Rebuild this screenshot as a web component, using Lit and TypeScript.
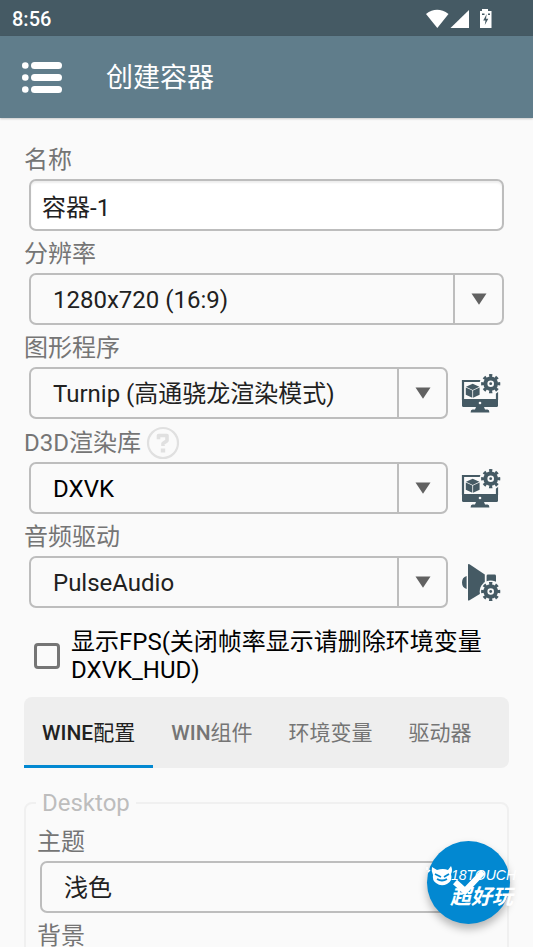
import { LitElement, html, css, svg, nothing } from "lit";
import { customElement, property, state } from "lit/decorators.js";

const gear = (cx: number, cy: number, halo: string) => svg`
  <circle cx=${cx} cy=${cy} r="11" fill=${halo} />
  <circle cx=${cx} cy=${cy} r="5.3" fill="none" stroke="#455a64" stroke-width="4" />
  <circle cx=${cx} cy=${cy} r="8" fill="none" stroke="#455a64" stroke-width="3.2"
    pathLength="16" stroke-dasharray="1 1" stroke-dashoffset="0.5" />
  <circle cx=${cx} cy=${cy} r="1.4" fill="#455a64" />`;

const displayIcon = html`
  <svg width="40" height="40" viewBox="0 0 40 40" aria-hidden="true">
    <path d="M2 27V8H36V27" fill="none" stroke="#455a64" stroke-width="2.2" />
    <path d="M1 26H37V32.5Q37 34 35.5 34H2.5Q1 34 1 32.5Z" fill="#455a64" />
    <circle cx="19" cy="30" r="1.3" fill="#fafafa" />
    <path d="M15 34H23L24 36.6H26.5Q28.4 36.8 28.4 39.4H9.6Q9.6 36.8 11.5 36.6H14Z" fill="#455a64" />
    <path d="M11.7 10.8L18.4 13.8L11.7 16.9L5 13.8Z M4.800 14.600L11.300 17.600V24.8L4.800 21.800Z M18.600 14.600L12.100 17.600V24.8L18.600 21.800Z" fill="#455a64" />
    ${gear(29.7, 10.7, "#fafafa")}
  </svg>`;

const audioIcon = html`
  <svg width="40" height="40" viewBox="0 0 40 40" aria-hidden="true">
    <path d="M5.6 14V27Q1 25.600 1 20.500T5.600 14Z" fill="#455a64" />
    <path d="M7 2.500Q7 1.500 8.500 2.300L23.800 12.500V29L8.500 38.300Q7 39 7 38Z" fill="#455a64" />
    <path d="M25.600 14Q25.600 12.600 27 12.600H33.600Q35 12.600 35 14V26H25.600Z" fill="#455a64" />
    ${gear(29.7, 29.5, "#fafafa")}
  </svg>`;

@customElement("select-box")
export class SelectBox extends LitElement {
  static styles = css`
    :host { display: grid; min-width: 0; }
    .box {
      display: grid;
      grid-template-columns: minmax(0, 1fr) 49px;
      height: 52px;
      box-sizing: border-box;
      border: 2px solid #bdbdbd;
      border-radius: 7px;
    }
    select {
      grid-area: 1 / 1 / 2 / 3;
      appearance: none;
      border: 0;
      margin: 0;
      padding: 2px 50px 0 22px;
      background: transparent;
      outline: none;
      color: #212121;
      font: 24px/28px Roboto, "Noto Sans CJK SC", sans-serif;
    }
    select.strong { color: #000; }
    .arrow {
      grid-area: 1 / 2;
      display: grid;
      place-items: center;
      border-left: 2px solid #bdbdbd;
      pointer-events: none;
    }
  `;

  @property() name = "";
  @property() value = "";
  @property({ type: Boolean }) strong = false;

  render() {
    return html`
      <div class="box">
        <select class=${this.strong ? "strong" : ""} aria-label=${this.name}>
          <option>${this.value}</option>
        </select>
        <span class="arrow">
          <svg width="16" height="12" viewBox="0 0 16 12"><path d="M0.500 0.500H15.500L8 11.800Z" fill="#616161" /></svg>
        </span>
      </div>`;
  }
}

@customElement("app-root")
export class AppRoot extends LitElement {
  static styles = css`
    :host {
      display: flex;
      flex-direction: column;
      height: 100vh;
      position: relative;
      overflow: hidden;
      background: #fafafa;
      color: #212121;
      font: 24px/28px Roboto, "Noto Sans CJK SC", sans-serif;
    }
    button { border: 0; padding: 0; background: none; font: inherit; color: inherit; }
    .status {
      flex: none;
      display: flex;
      align-items: center;
      justify-content: space-between;
      box-sizing: border-box;
      height: 36px;
      padding: 2px 40px 0 12px;
      background: #455a64;
      color: #fff;
      font-size: 20px;
      font-weight: 500;
    }
    .appbar {
      flex: none;
      display: flex;
      align-items: center;
      gap: 44px;
      box-sizing: border-box;
      height: 82px;
      padding: 2px 22px 0;
      background: #607d8b;
      box-shadow: 0 1px 2px rgba(0, 0, 0, 0.2);
      color: #fff;
    }
    .appbar button, .tool { display: grid; place-items: center; }
    h1 { margin: 0; font-size: 27px; line-height: 32px; font-weight: 400; }
    main {
      flex: 1;
      min-height: 0;
      overflow: auto;
      scrollbar-width: none;
      padding: 19px 24px 0;
    }
    .label {
      display: flex;
      align-items: center;
      gap: 5px;
      box-sizing: border-box;
      height: 42px;
      padding-top: 4px;
      color: #757575;
    }
    .label.tall { height: 43px; }
    .label button { display: grid; }
    .row { display: flex; align-items: center; margin: 0 5px; }
    .row select-box { flex: 1; }
    .tool { width: 40px; height: 40px; margin: 0 3px 0 13px; }
    .name {
      flex: 1;
      min-width: 0;
      box-sizing: border-box;
      height: 52px;
      padding: 0 11px;
      border: 2px solid #bdbdbd;
      border-radius: 7px;
      background: #fff;
      box-shadow: inset 0 2px 2px #eee;
      outline: none;
      color: #212121;
      font: 24px/28px Roboto, "Noto Sans CJK SC", sans-serif;
    }
    .check {
      display: flex;
      align-items: center;
      gap: 11px;
      margin: 20px 10px 13px;
      color: #000;
    }
    .check input {
      flex: none;
      appearance: none;
      width: 26px;
      height: 26px;
      margin: 0;
      border: 3px solid #757575;
      border-radius: 4px;
    }
    .tabs {
      display: flex;
      height: 71px;
      border-radius: 8px;
      background: #eee;
    }
    .tabs button {
      padding: 3px 18px 0;
      border-bottom: 3px solid transparent;
      color: #757575;
      font-size: 21px;
      white-space: nowrap;
    }
    .tabs b { font-weight: 500; }
    .tabs .active { border-bottom-color: #0288d1; color: #212121; }
    fieldset {
      min-width: 0;
      height: 400px;
      margin: 21px 0 0;
      padding: 0 11px;
      border: 2px solid #f0f0f0;
      border-radius: 8px;
    }
    legend { padding: 0 6px; margin-left: -1px; color: #bdbdbd; }
    fieldset .first { height: 44px; padding-top: 6px; }
    fieldset .row { margin: 0 3px; }
    .fab {
      position: absolute;
      right: 23px;
      bottom: 23px;
      width: 83px;
      height: 83px;
      border-radius: 50%;
      background: #0288d1;
      box-shadow: 0 5px 9px rgba(0, 0, 0, 0.28);
      display: grid;
      place-items: center;
    }
    .mark {
      position: absolute;
      right: 11px;
      bottom: 36px;
      width: 96px;
      height: 48px;
      pointer-events: none;
    }
    .brand { font: italic 14px "Liberation Sans", sans-serif; fill: #fff; }
    .brand-cn { font: italic 700 21px "Noto Sans CJK SC", sans-serif; fill: #fff; }
  `;

  @state() private tab = 0;

  private field(label: string, value: string, icon: unknown = nothing, tool = "", help = false, strong = false) {
    return html`
      <div class="label ${help ? "tall" : ""}">
        <span>${label}</span>
        ${help ? html`
          <button aria-label="?">
            <svg width="34" height="34" viewBox="0 0 34 34">
              <circle cx="17" cy="17" r="15" fill="none" stroke="#e0e0e0" stroke-width="2.200" />
              <path d="M12.500 13.200V9.500H21V14.800L17 17.500V20" fill="none" stroke="#e0e0e0" stroke-width="3.600" stroke-linejoin="round" />
              <rect x="14.800" y="22.500" width="4.400" height="4" fill="#e0e0e0" />
            </svg>
          </button>` : nothing}
      </div>
      <div class="row">
        <select-box .name=${label} .value=${value} .strong=${strong}></select-box>
        ${tool ? html`<button class="tool" aria-label=${tool}>${icon}</button>` : nothing}
      </div>`;
  }

  render() {
    const tabs = [["WINE", "配置"], ["WIN", "组件"], ["", "环境变量"], ["", "驱动器"]];
    return html`
      <div class="status">
        <span>8:56</span>
        <svg width="67" height="20" viewBox="0 0 67 20" fill="#fff">
          <path d="M0 5Q11 -3.400 22.500 5L11.300 19Z" />
          <path d="M43 1V19H24.500Z" />
          <path d="M56 0H62V2H65.500V19H54V2H56Z" />
          <path d="M60.700 5L57.200 11.500H59.500L58.800 16L62.300 9.800H60Z M56 4.500H58.500V6H56Z M62 4.500H64V6H62Z" fill="#455a64" />
        </svg>
      </div>
      <header class="appbar">
        <button aria-label="菜单">
          <svg width="40" height="32" viewBox="0 0 40 32" fill="#fff">
            ${[0, 12, 24].map((y) => svg`
              <circle cx="3.300" cy=${y + 3.5} r="3.300" />
              <rect x="9" y=${y} width="31" height="7" rx="3.500" />`)}
          </svg>
        </button>
        <h1>创建容器</h1>
      </header>
      <main>
        <label class="label" for="name">名称</label>
        <div class="row"><input class="name" id="name" .value=${"容器-1"} /></div>
        ${this.field("分辨率", "1280x720 (16:9)")}
        ${this.field("图形程序", "Turnip (高通骁龙渲染模式)", displayIcon, "图形程序配置")}
        ${this.field("D3D渲染库", "DXVK", displayIcon, "D3D渲染库配置", true, true)}
        ${this.field("音频驱动", "PulseAudio", audioIcon, "音频驱动配置")}
        <label class="check">
          <input type="checkbox" />
          <span>显示FPS(关闭帧率显示请删除环境变量DXVK_HUD)</span>
        </label>
        <nav class="tabs">
          ${tabs.map(([latin, han], i) => html`
            <button class=${i === this.tab ? "active" : ""} @click=${() => (this.tab = i)}><b>${latin}</b>${han}</button>`)}
        </nav>
        <fieldset>
          <legend>Desktop</legend>
          <div class="label first">主题</div>
          <div class="row"><select-box .name=${"主题"} .value=${"浅色"}></select-box></div>
          <div class="label">背景</div>
        </fieldset>
      </main>
      <button class="fab" aria-label="确定">
        <svg width="36" height="30" viewBox="0 0 36 30" aria-hidden="true">
          <path d="M4 14L14 23L32 4" fill="none" stroke="#fff" stroke-width="6" />
        </svg>
      </button>
      <svg class="mark" viewBox="0 0 96 48">
        <path d="M6 4L11 7Q17 5 22 7L25 3Q27 7 25 11Q27 18 21 21Q15 24 10 20Q6 17 7 12Q5 8 6 4Z" fill="#fff" />
        <path d="M9 11L15 14M23 11L18 14M11 16Q16 19 21 16" fill="none" stroke="#0288d1" stroke-width="1.800" />
        <path d="M1 4V7M2 9L4 7" stroke="#fff" stroke-width="1.500" />
        <text class="brand" x="25" y="17">18TOUCH</text>
        <text class="brand-cn" x="24" y="41">超好玩</text>
      </svg>
    `;
  }
}
